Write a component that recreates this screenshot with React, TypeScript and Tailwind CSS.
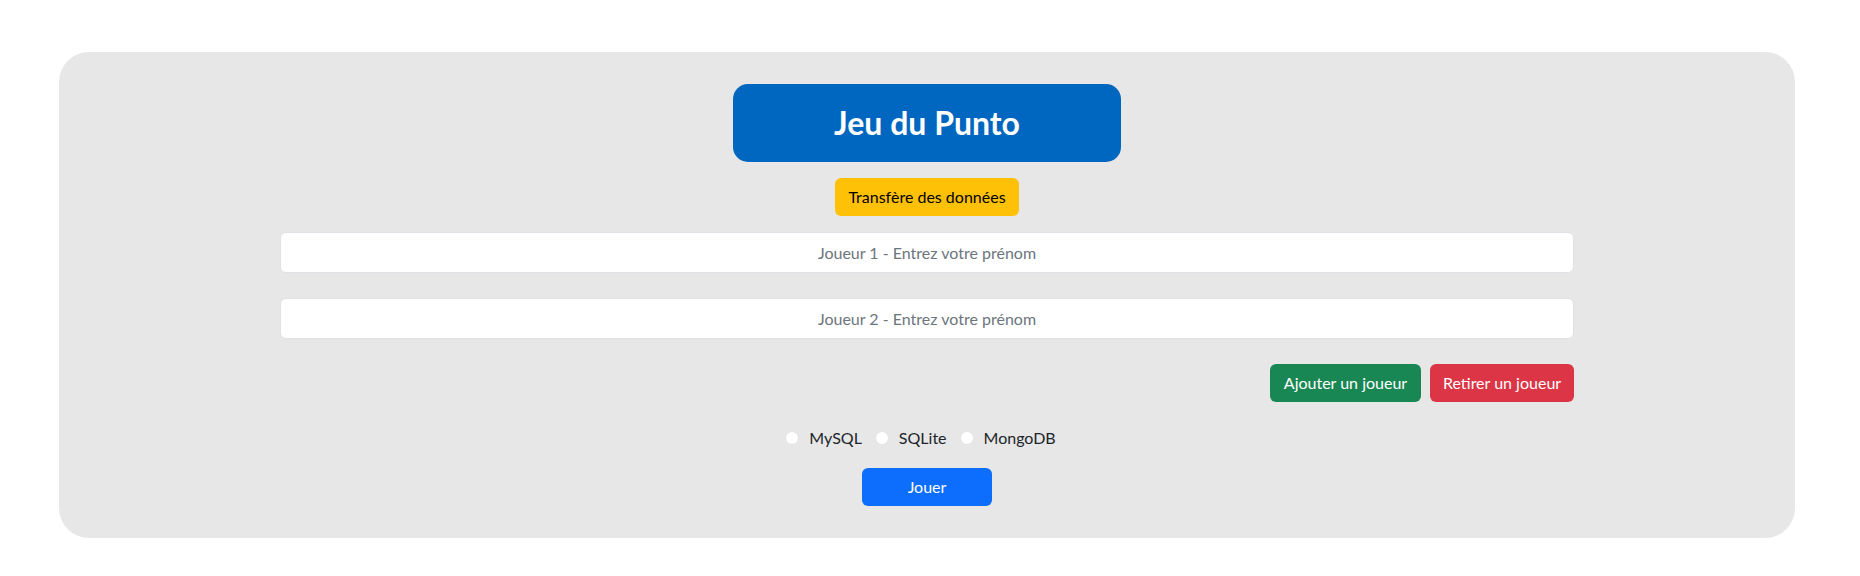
import { useState } from "react"

const bases = ["MySQL", "SQLite", "MongoDB"]

function App() {
    const [joueurs, setJoueurs] = useState(["", ""])
    const [base, setBase] = useState("")

    return <div className="min-h-screen bg-white pt-[52px] pl-[59px]" style={{ fontFamily: '"Lato", "Noto Sans", sans-serif' }}>
        <div className="w-[1736px] h-[486px] bg-[#e7e7e7] rounded-[30px] pt-[32px] flex flex-col items-center">
            <h1 className="w-[388px] h-[78px] bg-[#0067c0] rounded-[15px] flex items-center justify-center text-white text-[32px] font-bold">Jeu du Punto</h1>

            <button className="mt-[16px] w-[184px] h-[38px] bg-[#ffc107] rounded-[6px] text-[16px] text-black">Transfère des données</button>

            <div className="mt-[16px] w-[1294px] flex flex-col gap-[25px]">
                {joueurs.map((nom, i) => (
                    <input
                        key={i}
                        value={nom}
                        onChange={e => setJoueurs(joueurs.map((n, j) => j === i ? e.target.value : n))}
                        placeholder={`Joueur ${i + 1} - Entrez votre prénom`}
                        className="h-[41px] w-full bg-white border border-[#dee2e6] rounded-[6px] text-center text-[16px] text-[#212529] placeholder:text-[#6c757d] outline-none"
                    />
                ))}

                <div className="flex justify-end gap-[9px]">
                    <button onClick={() => setJoueurs([...joueurs, ""])} className="w-[151px] h-[38px] bg-[#198754] rounded-[6px] text-white text-[16px]">Ajouter un joueur</button>
                    <button onClick={() => joueurs.length > 2 && setJoueurs(joueurs.slice(0, -1))} className="w-[144px] h-[38px] bg-[#dc3545] rounded-[6px] text-white text-[16px]">Retirer un joueur</button>
                </div>
            </div>

            <div className="mt-[24px] flex items-center h-[24px] text-[16px] text-[#212529]">
                {bases.map(b => (
                    <label key={b} className="flex items-center mr-[13px]">
                        <input
                            type="radio"
                            name="base"
                            checked={base === b}
                            onChange={() => setBase(b)}
                            className="appearance-none w-[14px] h-[14px] rounded-full bg-white border border-[#e3e3e3] checked:border-[4px] checked:border-[#0d6efd] mr-[10px]"
                        />
                        {b}
                    </label>
                ))}
            </div>

            <button className="mt-[18px] w-[130px] h-[38px] bg-[#0d6efd] rounded-[6px] text-white text-[16px]">Jouer</button>
        </div>
    </div>
}

export default App
